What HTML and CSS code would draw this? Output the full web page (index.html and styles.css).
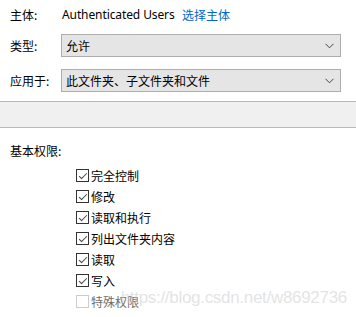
FILE: index.html
```html
<!DOCTYPE html>
<html>
<head>
<meta charset="utf-8">
<link rel="stylesheet" href="styles.css">
</head>
<body>
<div class="page">
  <div class="row principal">
    <span class="label">主体:</span>
    <span class="name">Authenticated Users</span>
    <span class="link">选择主体</span>
  </div>
  <div class="row field first">
    <span class="label">类型:</span>
    <div class="select"><span>允许</span><svg class="chev" width="9" height="6" viewBox="0 0 9 6"><path d="M0.5 0.8 L4.5 4.8 L8.5 0.8" fill="none" stroke="#444" stroke-width="1"/></svg></div>
  </div>
  <div class="row field">
    <span class="label">应用于:</span>
    <div class="select"><span>此文件夹、子文件夹和文件</span><svg class="chev" width="9" height="6" viewBox="0 0 9 6"><path d="M0.5 0.8 L4.5 4.8 L8.5 0.8" fill="none" stroke="#444" stroke-width="1"/></svg></div>
  </div>
  <div class="band"></div>
  <div class="section-title">基本权限:</div>
  <ul class="perms">
    <li><span class="box on"></span>完全控制</li>
    <li><span class="box on"></span>修改</li>
    <li><span class="box on"></span>读取和执行</li>
    <li><span class="box on"></span>列出文件夹内容</li>
    <li><span class="box on"></span>读取</li>
    <li><span class="box on"></span>写入</li>
    <li class="disabled"><span class="box"></span>特殊权限</li>
  </ul>
  <div class="watermark">https://blog.csdn.net/w8692736</div>
</div>
</body>
</html>
```

FILE: styles.css
```css
html, body {
  margin: 0;
  padding: 0;
  background: #fff;
}
.page {
  position: relative;
  width: 356px;
  height: 317px;
  overflow: hidden;
  font-family: "Noto Sans CJK SC", "Noto Sans", sans-serif;
  font-size: 12px;
  color: #000;
}
.row {
  display: flex;
  align-items: center;
  padding-left: 10px;
}
.principal {
  margin-top: 5px;
  height: 20px;
  line-height: 20px;
}
.principal .label {
  width: 52px;
}
.name {
  font-family: "Noto Sans", "Open Sans", sans-serif;
  width: 120px;
  letter-spacing: -0.1px;
}
.link {
  color: #0066cc;
}
.field {
  height: 23px;
  margin-top: 12px;
}
.field.first {
  margin-top: 9px;
}
.field .label {
  width: 51px;
}
.select {
  box-sizing: border-box;
  width: 280px;
  height: 23px;
  background: #e5e5e5;
  border: 1px solid #adadad;
  display: flex;
  align-items: center;
  justify-content: space-between;
  padding: 0 6px 0 4px;
  line-height: 20px;
}
.chev {
  display: block;
}
.band {
  box-sizing: border-box;
  margin-top: 9px;
  height: 27px;
  background: #f0f0f0;
  border-top: 1px solid #b9b9b9;
  border-bottom: 1px solid #b9b9b9;
}
.section-title {
  margin-top: 13px;
  padding-left: 10px;
  height: 20px;
  line-height: 20px;
}
.perms {
  list-style: none;
  margin: 4px 0 0 0;
  padding: 0 0 0 76px;
}
.perms li {
  display: flex;
  align-items: center;
  height: 21px;
  line-height: 21px;
}
.box {
  box-sizing: border-box;
  width: 13px;
  height: 13px;
  border: 1px solid #333;
  margin-right: 2px;
  position: relative;
  background: #fff;
}
.box.on::after {
  content: "";
  position: absolute;
  left: 3.5px;
  top: 0.5px;
  width: 3px;
  height: 7px;
  border-right: 1.1px solid #444;
  border-bottom: 1.1px solid #444;
  transform: rotate(45deg);
  transform-origin: center;
}
.disabled {
  color: #6d6d6d;
}
.disabled .box {
  border-color: #cccccc;
}
.watermark {
  position: absolute;
  right: 9px;
  top: 288px;
  font-family: "Liberation Sans", Arial, sans-serif;
  font-size: 17px;
  letter-spacing: -0.3px;
  line-height: 20px;
  color: rgba(200, 200, 200, 0.5);
  pointer-events: none;
}
```
